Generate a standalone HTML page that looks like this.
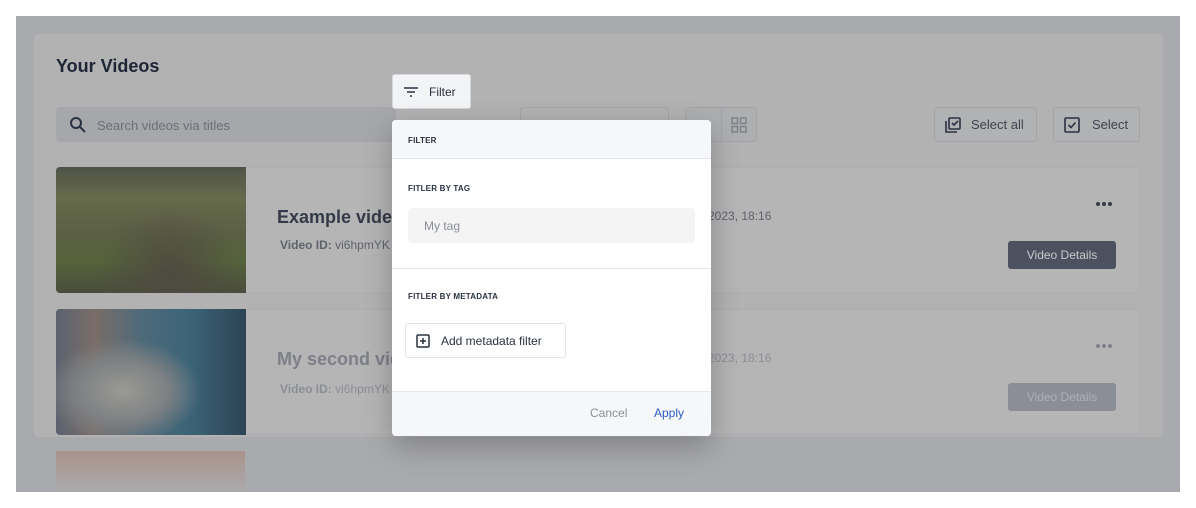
<!DOCTYPE html>
<html><head><meta charset="utf-8"><style>
*{box-sizing:border-box;margin:0;padding:0}
body{width:1196px;height:508px;background:#fff;font-family:"Liberation Sans",sans-serif;position:relative;overflow:hidden}
.abs{position:absolute}
.page{left:16px;top:16px;width:1164px;height:476px;background:#a9aaad}
.card{left:34px;top:34px;width:1129px;height:403px;background:#b2b2b3;border-radius:4px}
.item{left:56px;width:1084px;height:126px;border:1px solid #adaeb0;border-radius:4px;background:#b5b5b6}
.thumb{left:-1px;top:-1px;width:190px;height:126px;border-radius:4px 0 0 4px}
.btn{border:1px solid #a3a4a8;border-radius:3px;background:#b1b2b4;color:#3d4452;font-size:13px;display:flex;align-items:center}
.modal{left:392px;top:120px;width:319px;height:316px;background:#fff;border-radius:4px;box-shadow:0 10px 30px rgba(0,0,0,.25);overflow:hidden}
.lbl{font-size:8px;font-weight:bold;color:#2a3142;letter-spacing:.2px}
.dots{display:flex;gap:2px}
.dots i{width:4px;height:4px;border-radius:50%;display:block}
</style></head><body>
<div class="abs page"></div>
<div class="abs card"></div>
<div class="abs" style="left:56px;top:56px;font-size:18px;font-weight:bold;color:#1e2535">Your Videos</div>
<div class="abs" style="left:56px;top:107px;width:340px;height:35px;background:#a6a7aa;border-radius:4px"></div>
<svg class="abs" style="left:69px;top:116px" width="18" height="18" viewBox="0 0 18 18"><circle cx="7" cy="7" r="5" fill="none" stroke="#2a3142" stroke-width="2"/><path d="M11 11l5 5" stroke="#2a3142" stroke-width="2"/></svg>
<div class="abs" style="left:97px;top:118px;font-size:13px;color:#6b6f78">Search videos via titles</div>
<div class="abs" style="left:520px;top:107px;width:149px;height:35px;border:1px solid #a3a4a8;border-radius:4px"></div>
<div class="abs" style="left:685px;top:107px;width:72px;height:35px;border:1px solid #a3a4a8;border-radius:4px;background:#aeafb1"></div>
<div class="abs" style="left:721px;top:107px;width:1px;height:35px;background:#a3a4a8"></div>
<svg class="abs" style="left:731px;top:117px" width="16" height="16"><g fill="none" stroke="#808289" stroke-width="1.5"><rect x="1" y="1" width="5.5" height="5.5"/><rect x="9.5" y="1" width="5.5" height="5.5"/><rect x="1" y="9.5" width="5.5" height="5.5"/><rect x="9.5" y="9.5" width="5.5" height="5.5"/></g></svg>
<div class="abs btn" style="left:934px;top:107px;width:103px;height:35px;padding-left:9px"><svg width="18" height="18" viewBox="0 0 18 18" fill="none" stroke="#2a3142" stroke-width="1.6"><path d="M2 5v11h11"/><rect x="5" y="2" width="11" height="11" rx="1"/><path d="M8 7l2 2 4-4"/></svg><span style="margin-left:9px">Select all</span></div>
<div class="abs btn" style="left:1053px;top:107px;width:87px;height:35px;padding-left:10px"><svg width="16" height="16" viewBox="0 0 16 16" fill="none" stroke="#2a3142" stroke-width="1.6"><rect x="1" y="1" width="14" height="14" rx="1"/><path d="M4.5 8l2.5 2.5 4.5-5"/></svg><span style="margin-left:12px">Select</span></div>

<div class="abs item" style="top:167px">
 <div class="abs thumb" style="background:radial-gradient(ellipse at 60% 85%,#4e4a40 0%,transparent 45%),linear-gradient(180deg,#4f5347 0%,#676b4c 25%,#5c6045 50%,#55633a 75%,#4a4c3e 100%)"></div>
 <div class="abs" style="left:220px;top:39px;font-size:18px;font-weight:bold;color:#343a47">Example video</div>
 <div class="abs" style="left:223px;top:70px;font-size:12px;color:#5e626a"><b>Video ID:</b> vi6hpmYK</div>
 <div class="abs" style="left:651px;top:41px;font-size:12px;color:#5e626a">2023, 18:16</div>
 <div class="abs dots" style="left:1039px;top:34px"><i style="background:#343a47"></i><i style="background:#343a47"></i><i style="background:#343a47"></i></div>
 <div class="abs" style="left:951px;top:73px;width:108px;height:28px;background:#4b515e;border-radius:3px;color:#c7c9ce;font-size:12px;text-align:center;line-height:28px">Video Details</div>
</div>
<div class="abs item" style="top:309px">
 <div class="abs thumb" style="background:radial-gradient(ellipse at 35% 65%,#9a9a94 0%,#7f8284 25%,transparent 45%),linear-gradient(90deg,#5b6270 0%,#7a6d68 20%,#4e6a7a 45%,#3b6478 70%,#2c4454 100%)"></div>
 <div class="abs" style="left:220px;top:39px;font-size:18px;font-weight:bold;color:#7d8087">My second video</div>
 <div class="abs" style="left:223px;top:72px;font-size:12px;color:#8b8e94"><b>Video ID:</b> vi6hpmYK</div>
 <div class="abs" style="left:651px;top:41px;font-size:12px;color:#8b8e94">2023, 18:16</div>
 <div class="abs dots" style="left:1039px;top:34px"><i style="background:#7d8087"></i><i style="background:#7d8087"></i><i style="background:#7d8087"></i></div>
 <div class="abs" style="left:951px;top:73px;width:108px;height:28px;background:#8b8e96;border-radius:3px;color:#aeb0b5;font-size:12px;text-align:center;line-height:28px">Video Details</div>
</div>
<div class="abs" style="left:56px;top:451px;width:189px;height:41px;background:linear-gradient(180deg,#a9938a,#aaaaad)"></div>

<div class="abs" style="left:392px;top:74px;width:79px;height:35px;background:#f3f4f6;border:1px solid #d6d8dc;border-radius:3px;display:flex;align-items:center;padding-left:10px;font-size:12px;color:#2a3142">
<svg width="16" height="12" viewBox="0 0 16 12" stroke="#2a3142" stroke-width="1.5"><path d="M1 2h14M4 6h8M7 10h2"/></svg><span style="margin-left:10px">Filter</span></div>

<div class="abs modal">
 <div class="abs" style="left:0;top:0;width:319px;height:39px;background:#f6f7f9;border-bottom:1px solid #e5e7eb"></div>
 <div class="abs lbl" style="left:16px;top:16px">FILTER</div>
 <div class="abs lbl" style="left:16px;top:64px">FITLER BY TAG</div>
 <div class="abs" style="left:16px;top:88px;width:287px;height:35px;background:#f4f4f5;border-radius:4px;font-size:12px;color:#8b8f98;padding:11px 0 0 16px">My tag</div>
 <div class="abs" style="left:0;top:148px;width:319px;height:1px;background:#e5e7eb"></div>
 <div class="abs lbl" style="left:16px;top:172px">FITLER BY METADATA</div>
 <div class="abs" style="left:13px;top:203px;width:161px;height:35px;border:1px solid #e2e4e8;border-radius:3px;display:flex;align-items:center;padding-left:10px;font-size:12px;color:#2a3142">
  <svg width="14" height="14" viewBox="0 0 14 14" fill="none" stroke="#2a3142" stroke-width="1.5"><rect x="1" y="1" width="12" height="12" rx="1"/><path d="M7 4v6M4 7h6"/></svg><span style="margin-left:11px">Add metadata filter</span></div>
 <div class="abs" style="left:0;top:271px;width:319px;height:45px;background:#f6f7f9;border-top:1px solid #e5e7eb"></div>
 <div class="abs" style="left:198px;top:286px;font-size:12px;color:#8b8f98">Cancel</div>
 <div class="abs" style="left:262px;top:286px;font-size:12px;color:#2c5bc5">Apply</div>
</div>
</body></html>
